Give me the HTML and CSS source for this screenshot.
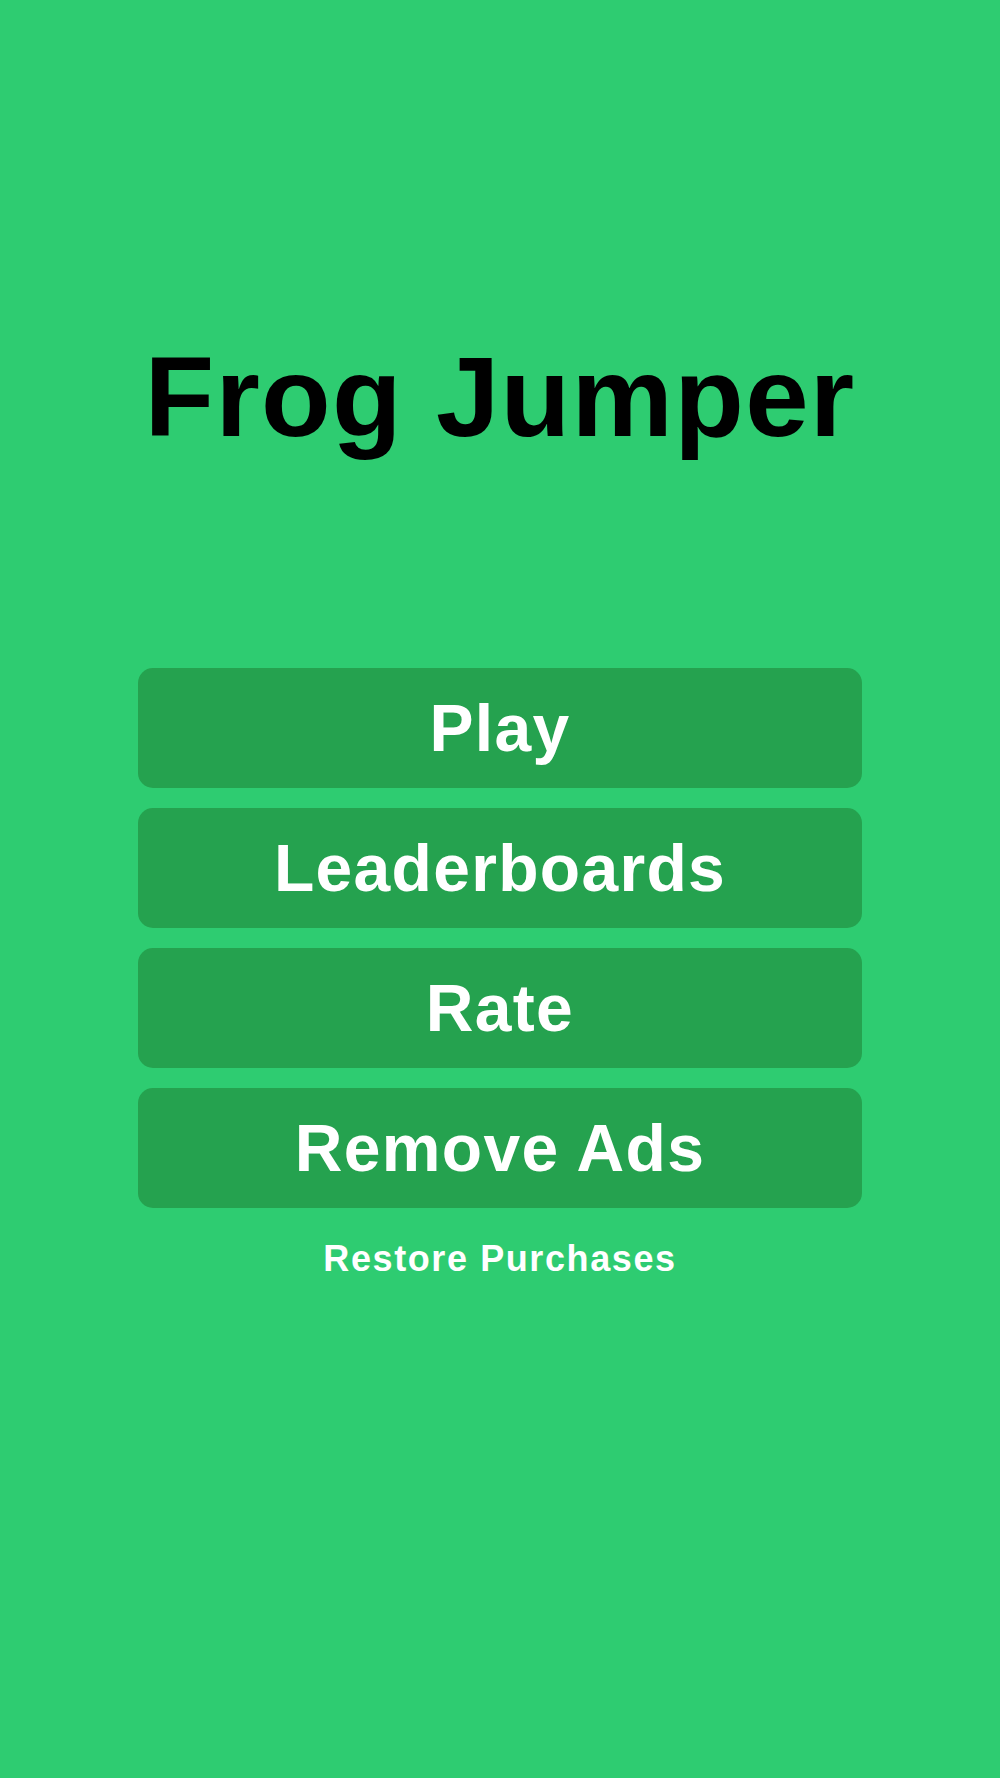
FILE: index.html
```html
<!DOCTYPE html>
<html lang="en">
<head>
    <meta charset="UTF-8">
    <meta name="viewport" content="width=device-width, initial-scale=1.0">
    <title>Frog Jumper</title>
    <link rel="stylesheet" href="styles.css">
</head>
<body>

<div class="menu">
    <h1 class="title">Frog Jumper</h1>

    <div class="menu-buttons">
        <button class="menu-btn">Play</button>
        <button class="menu-btn">Leaderboards</button>
        <button class="menu-btn">Rate</button>
        <button class="menu-btn">Remove Ads</button>
    </div>

    <a class="restore-link" href="#">Restore Purchases</a>
</div>

</body>
</html>
```

FILE: styles.css
```css
body {
    margin: 0;
    background: #2ecc71;
    font-family: "Liberation Sans", Arial, sans-serif;
    font-weight: bold;
}
.menu {
    min-height: 1778px;
    padding-top: 340px;
    box-sizing: border-box;
    text-align: center;
}
.title {
    margin: 0;
    font-size: 114px;
    line-height: 114px;
    color: #000;
    letter-spacing: 1.3px;
}
.menu-buttons {
    display: flex;
    flex-direction: column;
    gap: 20px;
    width: 724px;
    margin: 214px auto 0;
}
.menu-btn {
    height: 120px;
    padding: 0;
    border: none;
    border-radius: 15px;
    background: #25a24f;
    color: #fff;
    font-family: inherit;
    font-weight: bold;
    font-size: 66px;
    line-height: 120px;
    letter-spacing: 1.3px;
    cursor: pointer;
}
.restore-link {
    display: block;
    margin-top: 33px;
    font-size: 36px;
    line-height: 36px;
    letter-spacing: 1.6px;
    color: #fff;
    text-decoration: none;
}
```
